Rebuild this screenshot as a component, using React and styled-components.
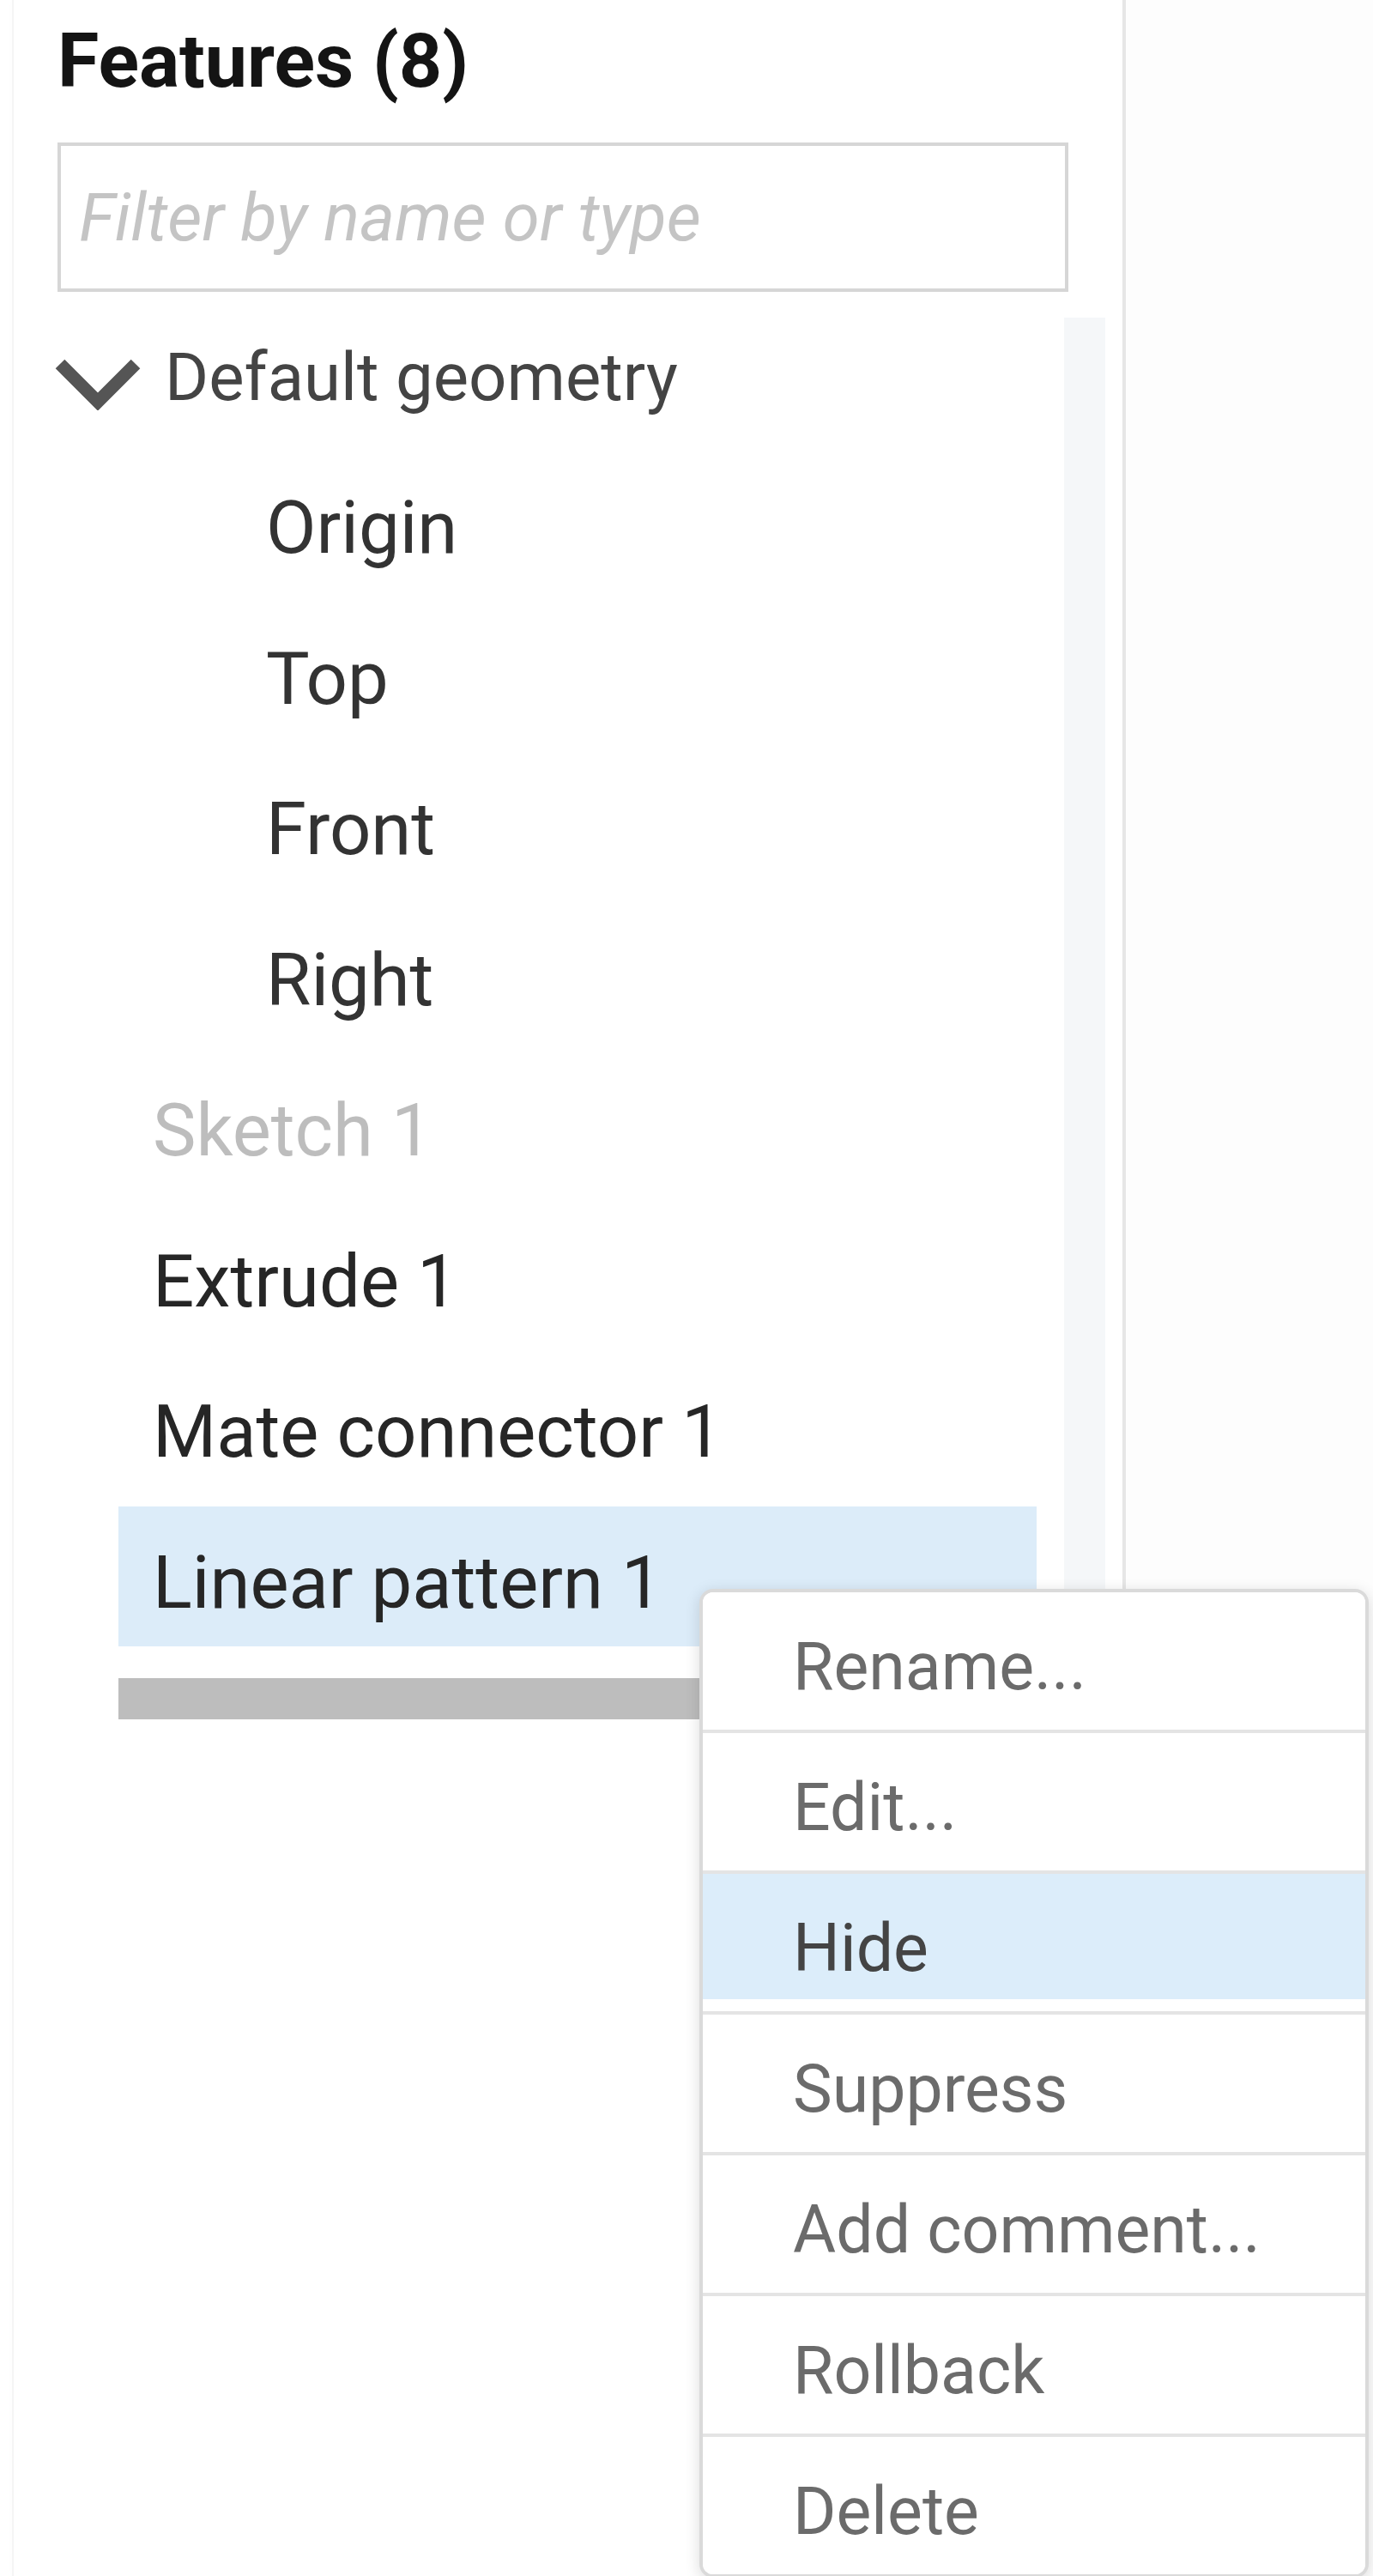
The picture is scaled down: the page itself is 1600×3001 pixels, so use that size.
import React from "react";
import styled, { createGlobalStyle } from "styled-components";

const GlobalStyle = createGlobalStyle`
  html, body { margin: 0; padding: 0; background: #ffffff; }
  body { font-family: Roboto, "Noto Sans", "Liberation Sans", sans-serif; }
  * { box-sizing: border-box; }
`;

const Page = styled.div`
  position: relative;
  width: 1600px;
  height: 3001px;
  overflow: hidden;
  display: flex;
  padding-left: 14px;
  background: #ffffff;
`;

const Panel = styled.aside`
  width: 1298px;
  height: 100%;
  background: #ffffff;
  border-left: 2px solid #f5f5f5;
  border-right: 4px solid #e6e6e6;
  box-shadow: 6px 0 12px rgba(0, 0, 0, 0.05);
  padding: 16px 20px 0 51px;
  display: flex;
  flex-direction: column;
`;

const Backdrop = styled.div`
  flex: 1;
  background: #fdfdfd;
`;

const Title = styled.h2`
  margin: 0;
  font-size: 88px;
  line-height: 110px;
  font-weight: 700;
  color: #141414;
`;

const Filter = styled.input`
  margin-top: 40px;
  width: 1178px;
  height: 174px;
  border: 4px solid #d6d6d6;
  padding: 0 0 0 21px;
  font-family: inherit;
  font-size: 78px;
  font-style: italic;
  color: #333;
  background: #fff;
  outline: none;
  &::placeholder {
    color: #c4c4c4;
    font-style: italic;
  }
`;

const Tree = styled.div`
  margin-top: 11px;
  display: grid;
  grid-template-columns: 1fr 48px;
  column-gap: 32px;
`;

const List = styled.div`
  display: flex;
  flex-direction: column;
`;

const VTrack = styled.div`
  margin-top: 19px;
  background: #f5f7f9;
`;

const Row = styled.div`
  height: 163px;
  margin-bottom: 12.5px;
  margin-left: ${(p) => p.$offset}px;
  padding-left: ${(p) => p.$pad}px;
  padding-top: 14px;
  display: flex;
  align-items: center;
  font-size: ${(p) => p.$size}px;
  white-space: nowrap;
  color: ${(p) => p.$color};
  background: ${(p) => (p.$selected ? "#dcecf9" : "transparent")};
`;

const Chevron = styled.svg`
  flex: none;
  margin-left: -5px;
  margin-top: 14px;
  margin-right: 26px;
`;

const HScroll = styled.div`
  margin-top: 24px;
  margin-left: 71px;
  height: 48px;
  background: #bdbdbd;
`;

const Menu = styled.ul`
  position: absolute;
  left: 815px;
  top: 1851px;
  width: 780px;
  margin: 0;
  padding: 0;
  list-style: none;
  background: #ffffff;
  border: 4px solid #dadada;
  border-radius: 16px;
  box-shadow: 0 4px 18px rgba(0, 0, 0, 0.14);
  overflow: hidden;
`;

const MenuItem = styled.li`
  height: ${(p) => (p.$first ? 160 : 164)}px;
  border-top: ${(p) => (p.$first ? "none" : "4px solid #e4e4e4")};
  padding: 14px 0 0 105px;
  display: flex;
  align-items: center;
  font-size: 77px;
  color: ${(p) => (p.$active ? "#444" : "#6b6b6b")};
  background: ${(p) => (p.$active ? "#dcedfa" : "#fff")};
  box-shadow: ${(p) => (p.$active ? "inset 0 -14px 0 #ffffff" : "none")};
`;

const items = [
  { label: "Origin", pad: 172, color: "#333" },
  { label: "Top", pad: 172, color: "#333" },
  { label: "Front", pad: 172, color: "#333" },
  { label: "Right", pad: 172, color: "#333" },
  { label: "Sketch 1", pad: 40, color: "#bdbdbd" },
  { label: "Extrude 1", pad: 40, color: "#262626" },
  { label: "Mate connector 1", pad: 40, color: "#262626" },
  { label: "Linear pattern 1", pad: 40, color: "#262626", selected: true },
];

const menu = ["Rename...", "Edit...", "Hide", "Suppress", "Add comment...", "Rollback", "Delete"];

export default function App() {
  return (
    <>
      <GlobalStyle />
      <Page>
        <Panel>
          <Title>Features (8)</Title>
          <Filter placeholder="Filter by name or type" />
          <Tree>
            <List>
              <Row $offset={0} $pad={0} $size={78} $color="#444">
                <Chevron width="104" height="62" viewBox="0 0 104 62">
                  <path d="M8 8 L52 52 L96 8" fill="none" stroke="#555" strokeWidth="15" />
                </Chevron>
                Default geometry
              </Row>
              {items.map((it) => (
                <Row
                  key={it.label}
                  $offset={71}
                  $pad={it.pad}
                  $size={85}
                  $color={it.color}
                  $selected={it.selected}
                >
                  {it.label}
                </Row>
              ))}
              <HScroll />
            </List>
            <VTrack />
          </Tree>
        </Panel>
        <Backdrop />
        <Menu>
          {menu.map((m, i) => (
            <MenuItem key={m} $first={i === 0} $active={m === "Hide"}>
              {m}
            </MenuItem>
          ))}
        </Menu>
      </Page>
    </>
  );
}
